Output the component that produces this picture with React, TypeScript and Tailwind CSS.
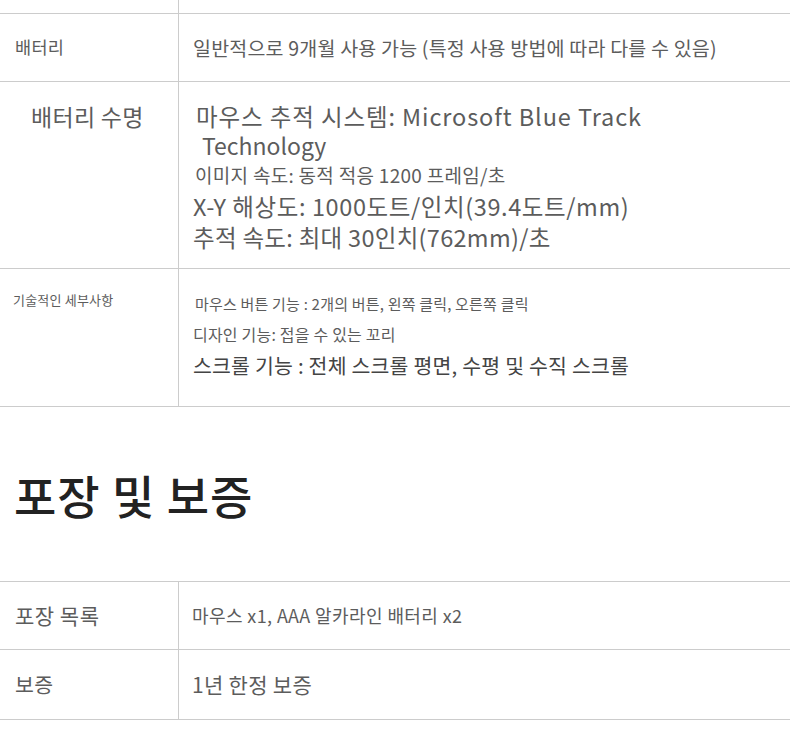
const font = { fontFamily: '"Noto Sans CJK KR", "Noto Sans", sans-serif' };

export default function App() {
  return (
    <div className="w-[790px] bg-white text-[#5c5c5c]" style={font}>
      {/* tail of previous table */}
      <div className="flex h-[14px] border-b border-[#cccccc]">
        <div className="w-[179px] border-r border-[#cccccc]" />
      </div>

      {/* battery */}
      <div className="flex h-[68px] border-b border-[#cccccc]">
        <div className="flex w-[179px] items-center border-r border-[#cccccc] pl-[15px] text-[17.5px] tracking-[0.3px]">
          배터리
        </div>
        <div className="flex items-center pl-[14px] text-[19.5px] tracking-[0.2px]">
          일반적으로 9개월 사용 가능 (특정 사용 방법에 따라 다를 수 있음)
        </div>
      </div>

      {/* battery life */}
      <div className="flex h-[187px] border-b border-[#cccccc]">
        <div className="w-[179px] border-r border-[#cccccc] pl-[31px] pt-[19px] text-[23px] leading-[30px] tracking-[0.3px]">
          배터리 수명
        </div>
        <div className="pl-[17px] pt-[19px]">
          <p className="text-[23.5px] leading-[30px] tracking-[0.9px]">마우스 추적 시스템: Microsoft Blue Track</p>
          <p className="pl-[6px] text-[23px] leading-[29px]">Technology</p>
          <p className="-ml-[1px] text-[19px] leading-[30px] tracking-[0.3px]">이미지 속도: 동적 적응 1200 프레임/초</p>
          <p className="-ml-[3px] text-[23.5px] leading-[32px] tracking-[0.6px]">X-Y 해상도: 1000도트/인치(39.4도트/mm)</p>
          <p className="-ml-[3px] text-[23.5px] leading-[30px] tracking-[0.3px]">추적 속도: 최대 30인치(762mm)/초</p>
        </div>
      </div>

      {/* tech details */}
      <div className="flex h-[138px] border-b border-[#cccccc]">
        <div className="w-[179px] border-r border-[#cccccc] pl-[13px] pt-[22px] text-[13px] leading-[18px] tracking-[0.2px]">
          기술적인 세부사항
        </div>
        <div className="pl-[16px] pt-[20px]">
          <p className="text-[15px] leading-[30px] tracking-[0.2px]">마우스 버튼 기능 : 2개의 버튼, 왼쪽 클릭, 오른쪽 클릭</p>
          <p className="-ml-[2px] text-[16px] leading-[31px] tracking-[0.2px]">디자인 기능: 접을 수 있는 꼬리</p>
          <p className="-ml-[2px] text-[20.5px] leading-[31px] tracking-[0.2px] text-[#444444]">
            스크롤 기능 : 전체 스크롤 평면, 수평 및 수직 스크롤
          </p>
        </div>
      </div>

      {/* packaging heading */}
      <div className="flex h-[174px] items-center pl-[14px]">
        <h2 className="text-[46px] font-medium leading-[52px] tracking-[1px] text-[#222222]">포장 및 보증</h2>
      </div>

      <div className="flex h-[69px] border-y border-[#cccccc]">
        <div className="flex w-[179px] items-center border-r border-[#cccccc] pl-[15px] text-[21px] tracking-[0.5px]">
          포장 목록
        </div>
        <div className="flex items-center pl-[13px] text-[18px] tracking-[0.4px]">
          마우스 x1, AAA 알카라인 배터리 x2
        </div>
      </div>
      <div className="flex h-[70px] border-b border-[#cccccc]">
        <div className="flex w-[179px] items-center border-r border-[#cccccc] pl-[15px] text-[20.5px] tracking-[0.3px]">
          보증
        </div>
        <div className="flex items-center pl-[13px] text-[21px] tracking-[0.3px]">1년 한정 보증</div>
      </div>
    </div>
  );
}
